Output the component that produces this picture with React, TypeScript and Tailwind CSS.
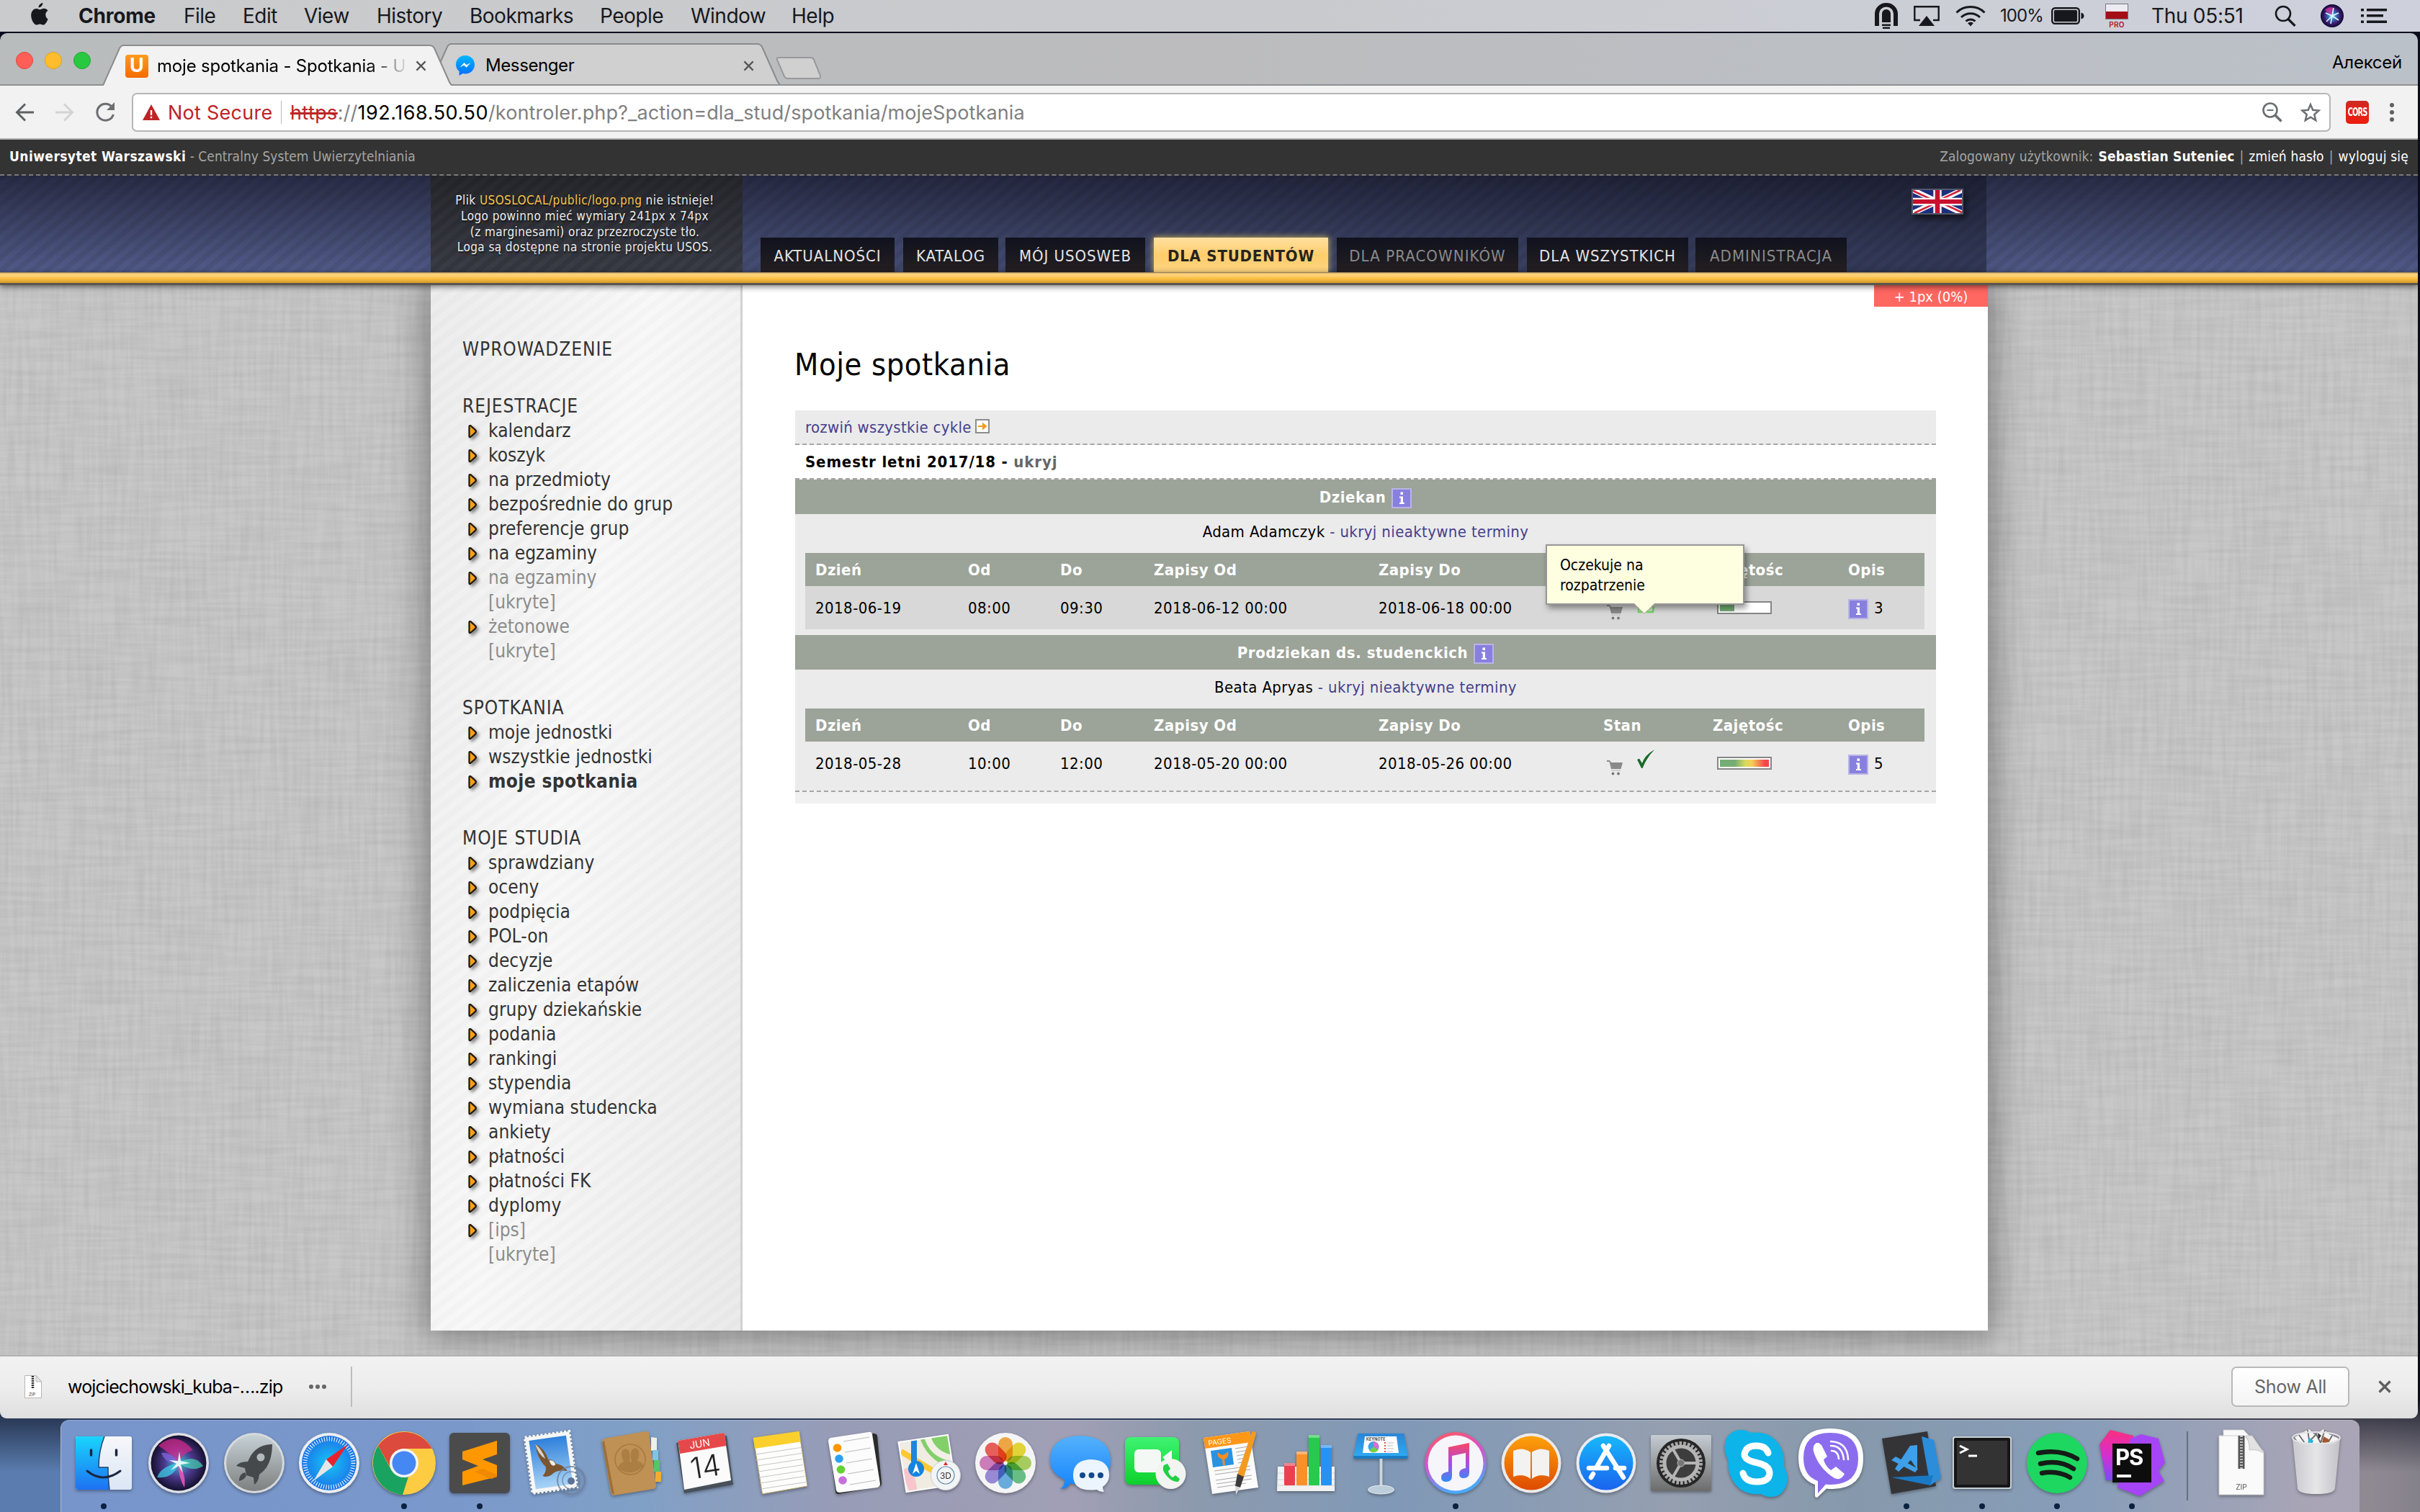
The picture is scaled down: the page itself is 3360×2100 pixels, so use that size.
import React from "react";

const TAHOMA = "font-['DejaVu_Sans_Condensed','DejaVu_Sans',sans-serif]";
const SYSTEM = "font-[Inter,'Liberation_Sans',sans-serif]";

/* ---------- macOS menu bar ---------- */

const MENUS = [
  { label: "File", w: "w-[82px]" },
  { label: "Edit", w: "w-[85px]" },
  { label: "View", w: "w-[101px]" },
  { label: "History", w: "w-[129px]" },
  { label: "Bookmarks", w: "w-[181px]" },
  { label: "People", w: "w-[126px]" },
  { label: "Window", w: "w-[140px]" },
  { label: "Help", w: "w-[80px]" },
];

function SiriBadge() {
  return (
    <svg viewBox="0 0 32 32" className="size-8">
      <defs>
        <radialGradient id="siriSmall" cx="50%" cy="50%" r="50%">
          <stop offset="0" stopColor="#9ff" />
          <stop offset=".3" stopColor="#3a7fc8" />
          <stop offset=".7" stopColor="#3b1a6e" />
          <stop offset="1" stopColor="#0c0a2c" />
        </radialGradient>
      </defs>
      <circle cx="16" cy="16" r="16" fill="url(#siriSmall)" />
      <path d="M6 8q6-6 12-3l-2 11z" fill="#d0359c" opacity=".8" />
      <path d="M16 16 18 5M16 16l9-4M16 16l9 6M16 16l-2 11M16 16l-8 8M16 16l-9-4" stroke="#d8fbff" strokeWidth="1.6" />
    </svg>
  );
}

function MenuBar() {
  return (
    <div className={`${SYSTEM} flex h-11 w-full items-center bg-gradient-to-r from-[#cacbcd] via-[#c9cacd] to-[#ced1dc] text-[28px] leading-[32px] tracking-[-0.5px] text-[#17181d]`}>
      <svg viewBox="0 0 26 32" className="ml-[42px] h-[31px] w-[26px] -translate-y-[3px]">
        <path d="M17.5 0c.2 3.500-2.900 6.700-5.900 6.700C11.200 3.500 14.300.4 17.500 0zM25 23c-1.600 4.500-4 8.600-6.800 8.600-1.900 0-2.500-1.200-4.800-1.200s-3 1.200-4.800 1.200C5.200 31.600.8 24.600.8 17.800c0-6.200 3.900-9.600 7.700-9.600 2.200 0 3.900 1.400 5.200 1.400 1.300 0 3.200-1.600 5.700-1.600 1.800 0 4 .9 5.400 3-4.700 2.800-3.900 9.800.2 12z" fill="#17181d" />
      </svg>
      <span className="ml-[41px] w-[146px] font-bold tracking-[-0.2px]">Chrome</span>
      {MENUS.map((m) => (
        <span key={m.label} className={`${m.w} shrink-0`}>{m.label}</span>
      ))}
      <div className="ml-auto flex items-center">
        <svg viewBox="0 0 32 36" className="h-9 w-8">
          <path d="M0 32V15a16 15 0 0 1 32 0v17h-6V15a10 9.500 0 0 0-20 0v17z" fill="#17181d" />
          <path d="M10 27V15a6 6 0 0 1 12 0v12zM10 29.500h12V32H10zM11 33.500h10V36H11z" fill="#17181d" />
        </svg>
        <svg viewBox="0 0 36 28" className="ml-[22px] h-7 w-9">
          <path d="M9 20H1.300V1.300h33.400V20H27" fill="none" stroke="#17181d" strokeWidth="2.400" />
          <path d="M18 14 29 28H7z" fill="#17181d" />
        </svg>
        <svg viewBox="0 0 42 30" className="ml-[22px] h-[30px] w-[42px]" fill="none" stroke="#17181d" strokeWidth="3">
          <path d="M1.500 10.500a28 28 0 0 1 39 0M8 17a18.500 18.500 0 0 1 26 0M14.500 22.500a9.500 9.500 0 0 1 13 0" />
          <path d="M21 29.500l-4-4.500q4-3 8 0z" fill="#17181d" stroke="none" />
        </svg>
        <span className="ml-[20px] w-[63px] text-[24px] tracking-[-0.9px]">100%</span>
        <svg viewBox="0 0 46 24" className="ml-[8px] h-6 w-[46px]">
          <rect x="1.200" y="1.200" width="37.600" height="21.600" rx="4" fill="none" stroke="#17181d" strokeWidth="2.400" />
          <rect x="4" y="4" width="32" height="16" rx="1.500" fill="#17181d" />
          <path d="M41.500 7.500q4 1 4 4.500t-4 4.500z" fill="#17181d" />
        </svg>
        <div className="ml-[29px] flex w-8 flex-col items-center">
          <div className="h-[22px] w-8 border border-[#77777f] bg-gradient-to-b from-[#ebebf2] from-50% to-[#a50e16] to-50%" />
          <span className="mt-[2px] text-[10px] leading-[10px] font-semibold tracking-[0.3px] text-[#b0142a]">PRO</span>
        </div>
        <span className="ml-[32px] w-[129px] whitespace-nowrap tracking-[-0.3px]">Thu 05:51</span>
        <svg viewBox="0 0 30 30" className="ml-[42px] size-[30px]" fill="none" stroke="#17181d" strokeWidth="2.600">
          <circle cx="12" cy="12" r="10" />
          <path d="m19 19.500 9.500 9.500" strokeWidth="3.200" />
        </svg>
        <div className="ml-[34px]"><SiriBadge /></div>
        <svg viewBox="0 0 36 20" className="mr-[46px] ml-6 h-5 w-9" fill="#17181d">
          <path d="M0 0h4v3.500H0zM0 8h4v3.500H0zM0 16.500h4V20H0zM8 0h28v3.500H8zM8 8h23v3.500H8zM8 16.500h28V20H8z" />
        </svg>
      </div>
    </div>
  );
}

/* ---------- Chrome frame ---------- */

function TabShape({ fill }: { fill: string }) {
  return (
    <svg viewBox="0 0 486 57" className="absolute inset-0 h-[57px] w-[486px]">
      <path d="M0 57Q2 56 3 52L24 5Q26 1 30 1H454Q459 1 461 5L482 52Q484 56 486 57Z" fill={fill} />
      <path d="M0 57Q2 56 3 52L24 5Q26 1 30 1H454Q459 1 461 5L482 52Q484 56 486 57" fill="none" stroke="#8b8b8d" strokeWidth="2" />
    </svg>
  );
}

function CloseX({ className }: { className: string }) {
  return (
    <svg viewBox="0 0 16 16" className={className}>
      <path d="M1.500 1.500l13 13M14.500 1.500l-13 13" stroke="#555" strokeWidth="2.400" />
    </svg>
  );
}

function TabStrip() {
  return (
    <div className={`${SYSTEM} flex h-[73px] items-end rounded-t-[10px] border-b-2 border-[#8f9092] bg-gradient-to-r from-[#b9bcbd] via-[#bcbcbe] to-[#bbc1c9] text-[24px]`}>
      <div className="mb-[21px] ml-[22px] flex w-[120px] gap-4">
        <span className="size-6 rounded-full border border-[#e2463f] bg-[#ff5f57]" />
        <span className="size-6 rounded-full border border-[#dea123] bg-[#ffbd2e]" />
        <span className="size-6 rounded-full border border-[#1aab29] bg-[#28c940]" />
      </div>
      <div className="relative z-10 -mb-[2px] h-[57px] w-[486px]">
        <TabShape fill="#f2f2f2" />
        <div className="relative flex h-full items-center pt-[2px]">
          <span className="ml-8 flex h-8 w-8 items-center justify-center rounded bg-gradient-to-b from-[#ff9a1c] to-[#f56a00] text-[27px] font-bold text-white">U</span>
          <span className="ml-3 w-[350px] overflow-hidden bg-gradient-to-r from-black from-84% to-transparent bg-clip-text whitespace-nowrap tracking-[-0.2px] text-transparent">moje spotkania - Spotkania - U</span>
          <CloseX className="ml-[9px] size-[15px]" />
        </div>
      </div>
      <div className="relative -ml-[31px] h-[57px] w-[486px]">
        <TabShape fill="#d0d0d0" />
        <div className="relative flex h-full items-center pt-[5px]">
          <svg viewBox="0 0 28 28" className="ml-[35px] size-7">
            <defs>
              <linearGradient id="msgr" x1="0" y1="0" x2="0" y2="1">
                <stop offset="0" stopColor="#00b8ff" />
                <stop offset="1" stopColor="#006cff" />
              </linearGradient>
            </defs>
            <path d="M14 0C6.300 0 1 5.600 1 12.600c0 4 1.700 7.300 4.600 9.500V28l5-3c1 .2 2.200.4 3.400.4 7.700 0 13-5.700 13-12.700S21.700 0 14 0z" fill="url(#msgr)" />
            <path d="m6.500 16.500 6-6.500 3.300 3.200L21.500 10l-6 6.700-3.300-3.300z" fill="#fff" />
          </svg>
          <span className="ml-[14px] w-[358px] tracking-[-0.4px] text-black">Messenger</span>
          <CloseX className="size-[15px]" />
        </div>
      </div>
      <svg viewBox="0 0 64 32" className="mb-[6px] -ml-[6px] h-8 w-16">
        <path d="M4 1H48q4 0 5 3l9 22q1 4-3 4H17q-4 0-5-3L2 4Q1 1 4 1z" fill="#d0d0d0" stroke="#98989a" strokeWidth="2" />
      </svg>
      <span className="mr-[22px] mb-[12px] ml-auto tracking-[-0.25px] text-black">Алексей</span>
    </div>
  );
}

function Toolbar() {
  return (
    <div className={`${SYSTEM} flex h-[75px] items-center border-b-2 border-[#b0b0b0] bg-[#f2f2f2] text-[27px] leading-[32px]`}>
      <svg viewBox="0 0 26 26" className="ml-[21px] size-[26px]" fill="none" stroke="#5f6063" strokeWidth="3">
        <path d="M26 13H3M14 1.500 2.500 13 14 24.500" />
      </svg>
      <svg viewBox="0 0 26 26" className="ml-[30px] size-[26px]" fill="none" stroke="#d3d3d3" strokeWidth="3">
        <path d="M0 13h23M12 1.500 23.500 13 12 24.500" />
      </svg>
      <svg viewBox="0 0 28 28" className="ml-[29px] size-7" fill="none" stroke="#6d6e71" strokeWidth="3">
        <path d="M24 7.500A11.500 11.500 0 1 0 25.400 17" />
        <path d="M27 0v11H16z" fill="#6d6e71" stroke="none" />
      </svg>
      <div className="ml-[23px] flex h-[54px] w-[3053px] items-center rounded-[7px] border-2 border-[#b6b6b6] bg-white">
        <svg viewBox="0 0 24 22" className="ml-[13px] h-[22px] w-6">
          <path d="M12 0l12 22H0z" fill="#bd2426" />
          <path d="M10.800 8h2.400v7h-2.400zM10.800 16.800h2.400v2.400h-2.400z" fill="#fff" />
        </svg>
        <span className="mt-[2px] ml-[11px] w-[157px] whitespace-nowrap tracking-[0.25px] text-[#bd2426]">Not Secure</span>
        <span className="h-8 w-px bg-[#bbb]" />
        <span className="mt-[2px] ml-[12px] whitespace-nowrap tracking-[0.12px] text-[#808080]">
          <span className="tracking-[0.4px] text-[#bd2426] line-through decoration-[3px]">https</span>://
          <span className="tracking-[0.55px] text-black">192.168.50.50</span>
          /kontroler.php?_action=dla_stud/spotkania/mojeSpotkania
        </span>
        <svg viewBox="0 0 28 28" className="ml-auto size-7" fill="none" stroke="#6d6e71" strokeWidth="2.600">
          <circle cx="11" cy="11" r="9.500" />
          <path d="M6.500 11h9" strokeWidth="2" />
          <path d="m18 18 8.500 8.500" strokeWidth="3.600" />
        </svg>
        <svg viewBox="0 0 28 28" className="mr-[12px] ml-[25px] size-7" fill="none" stroke="#6d6e71" strokeWidth="2.500">
          <path d="M14 3.200l3.300 7.600 8.300.7-6.300 5.500 1.900 8.100-7.200-4.300-7.200 4.300 1.900-8.100-6.300-5.500 8.300-.7z" />
        </svg>
      </div>
      <span className="ml-[21px] flex size-8 items-center justify-center rounded-[5px] bg-gradient-to-b from-[#cf2a20] to-[#ee1c0b]">
        <span className="scale-y-150 font-['DejaVu_Sans_Condensed'] text-[11px] leading-none font-bold tracking-[-0.9px] text-white">CORS</span>
      </span>
      <div className="ml-[29px] flex flex-col gap-1">
        <span className="size-[6px] rounded-full bg-[#5f6063]" />
        <span className="size-[6px] rounded-full bg-[#5f6063]" />
        <span className="size-[6px] rounded-full bg-[#5f6063]" />
      </div>
    </div>
  );
}

/* ---------- USOSweb page ---------- */

function TopBar() {
  return (
    <div className={`${TAHOMA} flex h-[50px] items-center justify-between border-b-2 border-dashed border-[#7a7a7a] bg-[#333] pr-[13px] pb-[1px] pl-[13px] text-[19px] leading-none whitespace-nowrap text-[#a5a5a5]`}>
      <div>
        <b className="tracking-[0.42px] text-white">Uniwersytet Warszawski</b>
        <span className="tracking-[0.05px]"> - Centralny System Uwierzytelniania</span>
      </div>
      <div>
        <span className="tracking-[0.1px]">Zalogowany użytkownik:</span>
        <b className="ml-[7px] tracking-[0.2px] text-white">Sebastian Suteniec</b>
        <span className="mx-[7px]">|</span>
        <span className="tracking-[0.15px] text-white">zmień hasło</span>
        <span className="mx-[7px]">|</span>
        <span className="tracking-[0.2px] text-white">wyloguj się</span>
      </div>
    </div>
  );
}

const NAV = [
  { label: "AKTUALNOŚCI", kind: "on", w: "w-[186px] mr-[12px]" },
  { label: "KATALOG", kind: "on", w: "w-[132px] mr-[10px]" },
  { label: "MÓJ USOSWEB", kind: "on", w: "w-[194px] mr-[12px]" },
  { label: "DLA STUDENTÓW", kind: "active", w: "w-[242px] mr-[12px]" },
  { label: "DLA PRACOWNIKÓW", kind: "off", w: "w-[252px] mr-[12px]" },
  { label: "DLA WSZYSTKICH", kind: "on", w: "w-[224px] mr-[10px]" },
  { label: "ADMINISTRACJA", kind: "off", w: "w-[210px]" },
];

const NAV_STYLE: Record<string, string> = {
  on: "bg-gradient-to-b from-[#10121d] to-[#241f22] text-[#e4e4e4] tracking-[0.95px]",
  off: "bg-gradient-to-b from-[#10121d] to-[#241f22] text-[#8a8a8a] tracking-[1.1px]",
  active: "bg-gradient-to-b from-[#ffe0a0] via-[#ffcd6b] to-[#fcd47f] font-bold text-[#26241f] tracking-[0.8px] shadow-[0_0_8px_1px_#b9a35a]",
};

function UkFlag() {
  return (
    <svg viewBox="0 0 72 36" className="h-9 w-[72px] border-2 border-[#55586a] shadow-[4px_6px_8px_rgba(0,0,0,.5)]" preserveAspectRatio="none">
      <path d="M0 0h72v36H0z" fill="#1b2f7d" />
      <path d="M0 0l72 36M72 0L0 36" stroke="#fff" strokeWidth="8" />
      <path d="M0 1l32 16M70 0L40 15M2 36l30-15M72 35L40 19" stroke="#d2243a" strokeWidth="3" />
      <path d="M36 0v36M0 18h72" stroke="#fff" strokeWidth="12" />
      <path d="M36 0v36M0 18h72" stroke="#c8102e" strokeWidth="7" />
    </svg>
  );
}

function Header() {
  return (
    <header className={`${TAHOMA} flex h-[134px] justify-center bg-[repeating-linear-gradient(140deg,rgba(0,0,0,.07)_0_7px,transparent_7px_14px),linear-gradient(#282b44,#515b88)] pr-[1px]`}>
      <div className="flex h-full w-[433px] flex-col items-center bg-[repeating-linear-gradient(140deg,rgba(0,0,0,.1)_0_7px,transparent_7px_14px),linear-gradient(#26272c,#3b3d47)] pt-[24px] pr-[5px] text-[17px] leading-[21.800px] tracking-[0.42px] whitespace-nowrap text-[#ececec] [text-shadow:1px_2px_2px_rgba(0,0,0,.7)]">
        <span>Plik <span className="text-[#f6c34b]">USOSLOCAL/public/logo.png</span> nie istnieje!</span>
        <span>Logo powinno mieć wymiary 241px x 74px</span>
        <span>(z marginesami) oraz przezroczyste tło.</span>
        <span>Loga są dostępne na stronie projektu USOS.</span>
      </div>
      <div className="flex h-full w-[1727px] bg-[linear-gradient(90deg,rgba(10,12,22,.08),rgba(10,12,22,.38))]">
        <nav className="mt-auto ml-[25px] flex text-[22px]">
          {NAV.map((n) => (
            <span key={n.label} className={`${n.w} ${NAV_STYLE[n.kind]} flex h-[48px] shrink-0 items-center justify-center pt-[3px] whitespace-nowrap`}>
              {n.label}
            </span>
          ))}
        </nav>
        <div className="mt-[18px] ml-[90px]"><UkFlag /></div>
      </div>
    </header>
  );
}

type MenuItem = { label: string; tone?: "muted" | "bold"; hidden?: boolean };
const SECTIONS: { title: string; items: MenuItem[] }[] = [
  { title: "WPROWADZENIE", items: [] },
  {
    title: "REJESTRACJE",
    items: [
      { label: "kalendarz" },
      { label: "koszyk" },
      { label: "na przedmioty" },
      { label: "bezpośrednie do grup" },
      { label: "preferencje grup" },
      { label: "na egzaminy" },
      { label: "na egzaminy", tone: "muted", hidden: true },
      { label: "żetonowe", tone: "muted", hidden: true },
    ],
  },
  {
    title: "SPOTKANIA",
    items: [{ label: "moje jednostki" }, { label: "wszystkie jednostki" }, { label: "moje spotkania", tone: "bold" }],
  },
  {
    title: "MOJE STUDIA",
    items: [
      { label: "sprawdziany" },
      { label: "oceny" },
      { label: "podpięcia" },
      { label: "POL-on" },
      { label: "decyzje" },
      { label: "zaliczenia etapów" },
      { label: "grupy dziekańskie" },
      { label: "podania" },
      { label: "rankingi" },
      { label: "stypendia" },
      { label: "wymiana studencka" },
      { label: "ankiety" },
      { label: "płatności" },
      { label: "płatności FK" },
      { label: "dyplomy" },
      { label: "[ips]", tone: "muted", hidden: true },
    ],
  },
];

const TONE = { muted: "text-[#8c8c8c]", bold: "font-bold tracking-[0.4px]", plain: "tracking-[0.05px]" };

function Sidebar() {
  return (
    <aside className="flex w-[433px] shrink-0 flex-col gap-[45px] border-r-[3px] border-[#d2d2d2] bg-[repeating-linear-gradient(142deg,rgba(0,0,0,.014)_0_8px,transparent_8px_16px),linear-gradient(100deg,#ececec,#f8f8f8_45%,#eaeaea)] pt-[72px] pl-[44px] text-[26px] leading-[34px] text-[#333]">
      {SECTIONS.map((s) => (
        <section key={s.title}>
          <h2 className="tracking-[0.95px]">{s.title}</h2>
          <ul>
            {s.items.map((it, i) => (
              <li key={i} className="flex">
                <svg viewBox="0 0 22 24" className="mt-[8px] ml-[6px] h-6 w-[22px] shrink-0 overflow-visible drop-shadow-[3px_3px_2px_rgba(0,0,0,.45)]">
                  <path d="M3.500 3.500q0-2 2-1.200l6.500 6q1.700 1.700 0 3.400l-6.500 6q-2 1-2-1z" fill="#f6a01a" stroke="#1d1405" strokeWidth="2.200" />
                </svg>
                <span className={`ml-[8px] whitespace-nowrap ${TONE[it.tone ?? "plain"]}`}>
                  {it.label}
                  {it.hidden && <span className="block">[ukryte]</span>}
                </span>
              </li>
            ))}
          </ul>
        </section>
      ))}
    </aside>
  );
}

function InfoIcon() {
  return (
    <svg viewBox="0 0 28 28" className="size-7 shrink-0">
      <rect x="1" y="1" width="26" height="26" fill="#8880de" stroke="#b9b4e6" strokeWidth="2" />
      <path d="M12.500 5.500h3.500v3.500h-3.500zM11 11.500h5v8.500h2v2h-7v-2h1.800v-6.500H11z" fill="#fff" />
    </svg>
  );
}

function Cart() {
  return (
    <svg viewBox="0 0 22 22" className="h-[22px] w-[22px]">
      <path d="M0 1h4l2 3h16l-2.500 9H6L3.500 3H0z" fill="#8a8a8a" />
      <path d="M6 14.500h13v1H6z" fill="#b5b5b5" />
      <circle cx="8.500" cy="19.500" r="1.900" fill="#777" />
      <circle cx="16" cy="19.500" r="1.900" fill="#777" />
    </svg>
  );
}

const COLS = "grid grid-cols-[212px_128px_130px_312px_312px_152px_188px_106px] pl-[14px]";
const HEADS = ["Dzień", "Od", "Do", "Zapisy Od", "Zapisy Do", "Stan", "Zajętośc", "Opis"];

type Meeting = { cells: string[]; full: boolean; count: string; tip?: boolean };

function Tooltip() {
  return (
    <div className="absolute -top-[73px] -left-[80px] z-20 h-[84px] w-[276px] border-2 border-[#979797] bg-[#fefee1] px-[18px] pt-[14px] text-[21px] leading-[27.500px] text-black shadow-[3px_5px_8px_rgba(0,0,0,.4)]">
      <span className="block">Oczekuje na</span>
      <span className="block">rozpatrzenie</span>
      <svg viewBox="0 0 30 16" className="absolute -bottom-[15px] left-[120px] h-4 w-[30px]">
        <path d="M0 0h30L15 15z" fill="#fefee1" />
        <path d="M0 2.500 15 15 30 2.500" fill="none" stroke="#a5a592" strokeWidth="1" />
      </svg>
    </div>
  );
}

function MeetingTable({ m }: { m: Meeting }) {
  return (
    <div className="mx-[14px] w-[1554px]">
      <div className={`${COLS} h-[46px] items-center bg-[#9ca398] font-bold tracking-[0.45px] text-white`}>
        {HEADS.map((h) => (
          <span key={h}>{h}</span>
        ))}
      </div>
      <div className={`${COLS} h-[60px] items-center ${m.tip ? "bg-[#d8d8d8]" : ""}`}>
        {m.cells.map((c, i) => (
          <span key={i} className="whitespace-nowrap tracking-[0.45px]">{c}</span>
        ))}
        <div className="relative flex h-[30px] w-[100px]">
          <div className="mt-[10px] ml-[5px]"><Cart /></div>
          {m.tip ? (
            <svg viewBox="0 0 26 26" className="-mt-[3px] ml-[19px] h-[26px] w-[26px]">
              <path d="M2 4h22v8l-8 6 8 7H2z" fill="#c4e8ba" />
              <path d="M3 14v10h4l2-4M14 24h9l1-8" fill="none" stroke="#74d266" strokeWidth="2.500" />
            </svg>
          ) : (
            <svg viewBox="0 0 28 28" className="-mt-[5px] ml-[19px] h-7 w-7 overflow-visible">
              <path d="M1 15l3-1.500 4 6.500Q12 8 25.500 1 15 11 8.500 27H7z" fill="#1b6a2b" stroke="#f6f6f6" strokeWidth="1.500" paintOrder="stroke" />
            </svg>
          )}
          {m.tip && <Tooltip />}
        </div>
        <div className="ml-[6px] h-[18px] w-[76px] border-2 border-[#868686] bg-white p-[2px]">
          <div className={m.full ? "h-full bg-[linear-gradient(90deg,#74ad75_30%,#d7da5d_52%,#f5cf57_65%,#f4454c_92%)]" : "h-full w-5 bg-[#74ad75]"} />
        </div>
        <div className="flex items-center">
          <div className="mt-[3px]"><InfoIcon /></div>
          <span className="ml-2">{m.count}</span>
        </div>
      </div>
    </div>
  );
}

function Office({ name, person, meeting }: { name: string; person: string; meeting: Meeting }) {
  return (
    <div>
      <div className="flex h-12 items-center justify-center bg-[#9ca398] font-bold tracking-[0.55px] text-white">
        <span>{name}</span>
        <span className="mt-[3px] ml-2"><InfoIcon /></span>
      </div>
      <div className="flex h-[54px] items-center justify-center pb-[6px] tracking-[0.38px]">
        <span className="whitespace-pre text-black">{person} </span>
        <span className="text-[#45418e]">- ukryj nieaktywne terminy</span>
      </div>
      <MeetingTable m={meeting} />
    </div>
  );
}

function Main() {
  return (
    <main className="relative w-[1729px] bg-white pl-[73px] text-[22px] text-black">
      <span className="absolute top-0 right-0 flex h-[30px] w-[158px] items-center justify-center bg-[#ff6760] pt-[2px] text-[20px] text-white">+ 1px (0%)</span>
      <h1 className="-ml-[1px] pt-[80px] text-[43px] leading-[60px] tracking-[0.6px]">Moje spotkania</h1>
      <div className="mt-[34px] w-[1584px] bg-[#ebebeb]">
        <div className="flex h-12 items-center border-b-2 border-dashed border-[#a5a5a5] pl-[14px] text-[#45418e]">
          <span className="tracking-[0.28px]">rozwiń wszystkie cykle</span>
          <svg viewBox="0 0 20 20" className="mb-[2px] ml-[5px] size-5">
            <rect x="1" y="1" width="18" height="18" fill="#fff" stroke="#8d8d8d" strokeWidth="2" />
            <path d="M4 9h6V4.500L16.500 10 10 15.500V11H4z" fill="#f59a17" />
          </svg>
        </div>
        <div className="flex h-12 items-center border-b-2 border-dashed border-[#a5a5a5] bg-white pl-[14px] font-bold tracking-[0.85px]">
          <span className="whitespace-pre">Semestr letni 2017/18 - </span>
          <span className="text-[#666]">ukryj</span>
        </div>
        <Office name="Dziekan" person="Adam Adamczyk" meeting={{ cells: ["2018-06-19", "08:00", "09:30", "2018-06-12 00:00", "2018-06-18 00:00"], full: false, count: "3", tip: true }} />
        <div className="h-2" />
        <Office name="Prodziekan ds. studenckich" person="Beata Apryas" meeting={{ cells: ["2018-05-28", "10:00", "12:00", "2018-05-20 00:00", "2018-05-26 00:00"], full: true, count: "5" }} />
        <div className="mt-2 h-[18px] border-t-2 border-dashed border-[#a5a5a5] bg-[#f1f1f1]" />
      </div>
    </main>
  );
}

function LinenTexture() {
  return (
    <svg className="pointer-events-none absolute inset-0 h-full w-full">
      <filter id="weaveV" x="0" y="0" width="100%" height="100%">
        <feTurbulence type="fractalNoise" baseFrequency="0.16 0.010" numOctaves="2" seed="4" />
        <feColorMatrix values="0 0 0 0 0  0 0 0 0 0  0 0 0 0 0  .5 0 0 0 -.17" />
      </filter>
      <filter id="weaveH" x="0" y="0" width="100%" height="100%">
        <feTurbulence type="fractalNoise" baseFrequency="0.010 0.16" numOctaves="2" seed="9" />
        <feColorMatrix values="0 0 0 0 0  0 0 0 0 0  0 0 0 0 0  .5 0 0 0 -.17" />
      </filter>
      <rect width="100%" height="100%" filter="url(#weaveV)" opacity=".17" />
      <rect width="100%" height="100%" filter="url(#weaveH)" opacity=".17" />
    </svg>
  );
}

function Page() {
  return (
    <div className="relative h-[1688px] overflow-hidden bg-[#c8c8c8]">
      <LinenTexture />
      <div className="relative">
        <TopBar />
        <Header />
        <div className="relative z-10 h-[18px] border-b-[3px] border-[#5b574c] bg-[linear-gradient(#7b6a45,#fdd27e_14%,#fdcf72_35%,#fbbf3f_60%,#d39a2e_100%)] shadow-[0_2px_8px_rgba(0,0,0,.55)]" />
        <div className={`${TAHOMA} ml-[598px] flex h-[1452px] w-[2162px] shadow-[0_0_46px_6px_rgba(0,0,0,.38)]`}>
          <Sidebar />
          <Main />
        </div>
      </div>
    </div>
  );
}

function DownloadShelf() {
  return (
    <div className={`${SYSTEM} flex h-[88px] items-center rounded-b-[9px] border-t-2 border-[#b2b2b2] bg-gradient-to-b from-[#f2f2f2] via-[#ededed] to-[#dfdfdf] pb-[2px] text-[25px] leading-[30px]`}>
      <svg viewBox="0 0 24 32" className="ml-[34px] h-8 w-6">
        <path d="M.5.500H16L23.500 9v22.500H.5z" fill="#fff" stroke="#b5b5b5" />
        <path d="M16 .5V9h7.500z" fill="#e5e5e5" stroke="#b5b5b5" />
        <path d="M11.500 1v17" stroke="#333" strokeWidth="3.500" strokeDasharray="2 1" />
        <text x="6" y="29" className="text-[6px]" fill="#444">ZIP</text>
      </svg>
      <span className="ml-[36px] w-[335px] whitespace-nowrap tracking-[-0.85px] text-black">wojciechowski_kuba-….zip</span>
      <div className="flex gap-[3px]">
        <span className="size-[6px] rounded-full bg-[#666]" />
        <span className="size-[6px] rounded-full bg-[#666]" />
        <span className="size-[6px] rounded-full bg-[#666]" />
      </div>
      <span className="ml-[34px] h-14 w-[2px] bg-[#bdbdbd]" />
      <span className="ml-auto flex h-14 w-[164px] items-center justify-center rounded-[7px] border-2 border-[#b9b9b9] bg-gradient-to-b from-white to-[#f4f4f4] tracking-[-0.3px] text-[#666]">Show All</span>
      <svg viewBox="0 0 18 18" className="mr-[37px] ml-[40px] size-[18px]">
        <path d="M1.500 1.500l15 15M16.500 1.500l-15 15" stroke="#5f5f5f" strokeWidth="3.200" />
      </svg>
    </div>
  );
}

/* ---------- Dock ---------- */

function Grad({ id, stops, x2 = 0, y2 = 1 }: { id: string; stops: string[]; x2?: number; y2?: number }) {
  return (
    <linearGradient id={id} x1="0" y1="0" x2={x2} y2={y2}>
      {stops.map((c, i) => (
        <stop key={i} offset={i / (stops.length - 1)} stopColor={c} />
      ))}
    </linearGradient>
  );
}

const Finder = (
  <>
    <Grad id="fdL" stops={["#1ad5fd", "#1d72f2"]} />
    <Grad id="fdR" stops={["#f6f7fa", "#dbe6f5"]} />
    <rect x="11" y="13" width="78" height="74" rx="3" fill="url(#fdR)" />
    <path d="M51 13H14q-3 0-3 3v68q0 3 3 3h44q-2-14-2-31H43q0-23 8-43z" fill="url(#fdL)" />
    <path d="M51 13q-8 20-8 43h13q0 17 2 31" fill="none" stroke="#24436e" strokeWidth="1.500" />
    <path d="M32.500 32v7M67.500 32v7" stroke="#1a2740" strokeWidth="3.500" strokeLinecap="round" />
    <path d="M27 61q22 18 46 0" fill="none" stroke="#1a2740" strokeWidth="3" strokeLinecap="round" />
  </>
);
const Siri = (
  <>
    <radialGradient id="siriBg"><stop offset="0" stopColor="#35c5d8" /><stop offset=".5" stopColor="#4c3a8e" /><stop offset="1" stopColor="#14102e" /></radialGradient>
    <circle cx="50" cy="50" r="42" fill="#dfe0e6" />
    <circle cx="50" cy="50" r="38.500" fill="url(#siriBg)" />
    <path d="M22 26q24-22 48 6Q56 36 50 50 38 36 22 26z" fill="#d82a8c" opacity=".7" />
    <path d="M50 50Q72 36 84 54 70 64 50 50z" fill="#45e2b8" opacity=".65" />
    <path d="M50 50Q44 72 20 70 26 54 50 50z" fill="#3fd5ef" opacity=".7" />
    <path d="M49 50q12 16 9 34-8-14-9-34z" fill="#e657b4" opacity=".9" />
    <path d="M26 36q14-2 24 14-18 2-24-14z" fill="#7e62d8" opacity=".8" />
    <path d="m51 34 2 13 13 3-13 2 3 12-6-10-11 6 8-9-10-5 12 1z" fill="#f4ffff" opacity=".9" />
  </>
);
const Launchpad = (
  <>
    <Grad id="lpBg" stops={["#c6d1d6", "#7e8080"]} />
    <circle cx="50" cy="50" r="42" fill="#d6dadc" />
    <circle cx="50" cy="50" r="39" fill="url(#lpBg)" />
    <path d="M75 24q-20 0-30 16l-4 8q-12 0-16 6l12 3 2 10 10 3 1 10q6-4 7-14Q75 54 75 24z" fill="#46494b" />
    <circle cx="59" cy="42" r="5.500" fill="#b2babd" />
    <path d="M37 63q-8 2-8 12 8-2 10-8z" fill="#46494b" />
  </>
);
const Safari = (
  <>
    <radialGradient id="sfBg"><stop offset="0" stopColor="#17c6f5" /><stop offset="1" stopColor="#1b73e8" /></radialGradient>
    <circle cx="50" cy="50" r="42" fill="#eceef2" />
    <circle cx="50" cy="50" r="38" fill="url(#sfBg)" />
    <circle cx="50" cy="50" r="33.500" fill="none" stroke="#fff" strokeWidth="6" strokeDasharray="1 2.500" />
    <path d="M76 24 46 45l9 10z" fill="#e8222c" />
    <path d="M28 75 46 45l9 10z" fill="#e6e6e6" />
  </>
);
const Chrome = (
  <>
    <circle cx="50" cy="50" r="44" fill="#fdcc42" />
    <path d="M14 26A44 44 0 0 1 89 30H50A20 20 0 0 0 31 56z" fill="#dc4a3d" />
    <path d="M14 26 32.500 60Q40 71 56 69L48 94A44 44 0 0 1 14 26z" fill="#1aa260" />
    <circle cx="50" cy="50" r="20" fill="#f4f4f4" />
    <circle cx="50" cy="50" r="16.500" fill="#4587f3" />
  </>
);
const Sublime = (
  <>
    <rect x="8" y="8" width="84" height="84" rx="6" fill="#4b4b4c" />
    <path d="M74 19v19L54 45l20 8v16L26 81V62l22-8-22-9V34z" fill="#ff9800" />
    <path d="m54 58 20 8v3l-8 3-24-10z" fill="#f08800" />
  </>
);
const Mail = (
  <>
    <Grad id="mlBg" stops={["#2f80dc", "#a8d4f5"]} />
    <g transform="rotate(-8 45 50)">
      <rect x="14" y="10" width="62" height="78" fill="#f6f6f6" stroke="#f6f6f6" strokeWidth="4" strokeDasharray="3 2.500" />
      <rect x="19" y="15" width="52" height="68" fill="url(#mlBg)" />
      <path d="M27 21q12 7 15 24 7 0 10 7 10 3 14 12-15-4-22 2-8 4-13 0 6-4 6-12-10-12-10-33z" fill="#7a5531" />
      <path d="M27 21q8 8 11 22-9-7-11-22z" fill="#d9d2c4" />
      <path d="M43 46q7 0 8 7-6 4-8-7z" fill="#f3efe6" />
    </g>
    <circle cx="73" cy="74" r="19" fill="none" stroke="#6d7f9d" strokeWidth="2" opacity=".8" />
    <circle cx="73" cy="74" r="12" fill="none" stroke="#6d7f9d" strokeWidth="1.500" opacity=".8" />
    <circle cx="73" cy="75" r="5" fill="#5b7196" />
  </>
);
const Contacts = (
  <>
    <path d="M80 14l8 1v18h-8z" fill="#eee" />
    <path d="M82 32h8v14h-8z" fill="#7cc5e8" />
    <path d="M84 46h8v16h-8z" fill="#56c568" />
    <path d="M86 62h8v14h-8z" fill="#f0ad33" />
    <path d="M15 16 72 6q4-1 5 3l10 72q0 5-4 5L28 95q-3 0-4-4L12 21q0-4 3-5z" fill="#c09154" />
    <path d="m12 21 3-2 14 75-4-2z" fill="#9d7038" />
    <ellipse cx="51" cy="45" rx="21" ry="21" fill="none" stroke="#a67a3f" strokeWidth="1.500" />
    <path d="M34 57q2-7 8-9-7-14 2-18 9 1 6 18h3q-4-17 5-19 9 3 3 18 6 1 9 7-18 17-36 3z" fill="#ab7f44" />
  </>
);
const Calendar = (
  <>
    <path d="m10 22 70-10 9 68-68 12z" fill="#48505a" />
    <path d="m12.500 19 64-11 9.500 66-65 13z" fill="#fbfbfb" />
    <path d="m12.500 19 64-11 3 18-64.500 11z" fill="#e6484a" />
    <g transform="rotate(-9 46 46)">
      <text x="46" y="28" textAnchor="middle" className="font-[Inter] text-[14px]" fill="#fff">JUN</text>
      <text x="49" y="70" textAnchor="middle" className="font-[Inter] text-[41px] font-light" fill="#222">14</text>
    </g>
  </>
);
const Notes = (
  <>
    <path d="m13 15 63.500-9L88 82 25.500 93z" fill="#fdfdfb" stroke="#b8a36a" />
    <path d="m13 15 63.500-9 2 14.500L15 30z" fill="#fbd02d" />
    <path d="m16 38 63-9.500M17 46l63-9.500M18.500 54 81 44.500M19.500 62 82 52.500M21 70l62-9.500M22 78l62-9.500M23.500 86 86 76.500" stroke="#c6c6c6" strokeWidth="1.200" />
  </>
);
const Reminders = (
  <>
    <path d="m18 18 58-9q4 0 5 3l6 66q0 4-4 5l-56 10q-4 0-4-4L14 22q0-3 4-4z" fill="#2b2b2b" />
    <path d="m16 15 53-8q4-1 5 3l11 69q0 4-4 5l-52 7q-4 0-5-3L13 20q0-4 3-5z" fill="#fcfcfc" />
    <path d="m34 20 36-6M36 35l36-6M38 50l36-6M40 65l36-6M43 80l36-6" stroke="#bbb" strokeWidth="1.200" />
    <circle cx="25.500" cy="29" r="5.800" fill="#ff9500" />
    <circle cx="28" cy="44" r="5.800" fill="#2aa1f5" />
    <circle cx="30.500" cy="59" r="5.800" fill="#64d236" />
    <circle cx="33" cy="74" r="5.800" fill="#c56fdc" />
  </>
);
const Maps = (
  <>
    <clipPath id="mapClip"><path d="m6.500 21 68.500-10 11 69-68.500 10z" /></clipPath>
    <g clipPath="url(#mapClip)">
      <path d="M0 0h100v100H0z" fill="#f0ece2" />
      <path d="M34 8h50v50Q44 48 34 8z" fill="#83cf6a" />
      <path d="M46 10q6 30 40 34" stroke="#f3efe6" strokeWidth="9" fill="none" />
      <path d="M10 34 86 80" stroke="#fbc933" strokeWidth="8" />
      <path d="M28 10v46" stroke="#1f86dc" strokeWidth="8" />
      <path d="M10 60l14 36 10-2-8-40z" fill="#f8c5cc" />
    </g>
    <path d="m6.500 21 68.500-10 11 69-68.500 10z" fill="none" stroke="#fff" strokeWidth="2" />
    <circle cx="31" cy="58" r="11" fill="#1583e0" />
    <path d="m31 50 5 15-5-4-5 4z" fill="#fff" />
    <circle cx="72" cy="67" r="20.500" fill="#f3f4f6" stroke="#ccc" />
    <circle cx="72" cy="67" r="12" fill="none" stroke="#5c8fa8" strokeWidth="1.200" />
    <path d="m72 48 3 5h-6z" fill="#e0282c" />
    <text x="72" y="71.500" textAnchor="middle" className="font-[Inter] text-[12px]" fill="#333">3D</text>
  </>
);
const PETALS = ["#f8a12c", "#e9d81f", "#a3cf4b", "#58bd7a", "#59a8de", "#8f80d6", "#cf6fb8", "#ee4d45"];
const Photos = (
  <>
    <circle cx="50" cy="50" r="42" fill="#f5f5f6" />
    {PETALS.map((c, i) => (
      <rect key={c} x="40" y="14" width="20" height="34" rx="10" fill={c} opacity=".88" transform={`rotate(${i * 45} 50 50)`} className="mix-blend-multiply" />
    ))}
    <circle cx="50" cy="50" r="2.500" fill="#fff" />
  </>
);
const Messages = (
  <>
    <Grad id="imB" stops={["#55b1fb", "#1485fe"]} />
    <path d="M50 12q42 2 42 35T50 80q-7 0-14-2-4 8-14 8 7-4 6-13Q8 64 8 46q0-33 42-34z" fill="url(#imB)" />
    <path d="M65 45q25 1 25 22 0 10-9 16 0 4 2 7-7 0-10-3-33 4-33-20 0-21 25-22z" fill="#ecf5fd" />
    <circle cx="53" cy="67" r="4" fill="#12498c" /><circle cx="65.500" cy="67" r="4" fill="#12498c" /><circle cx="78" cy="67" r="4" fill="#12498c" />
  </>
);
const FaceTime = (
  <>
    <Grad id="ftB" stops={["#3ff372", "#0dd12c"]} />
    <rect x="8" y="14" width="75" height="66" rx="8" fill="url(#ftB)" />
    <rect x="21" y="31" width="37" height="32" rx="6" fill="#f4f8f4" />
    <path d="m60 42 13-10v24z" fill="#f4f8f4" />
    <circle cx="71.500" cy="65" r="21" fill="#f1f4f1" />
    <path d="M62 53q-4 6 4 15t16 8l2-4-6-5-4 3q-5-3-6-9l3-3-4-7z" fill="#23cf43" />
  </>
);
const Pages = (
  <>
    <path d="m12 15 64-9 12 78-64 9z" fill="#fbfbfb" />
    <path d="m12 15 64-9 2 15-64 9z" fill="#ff9718" />
    <text x="19" y="26" transform="rotate(-8 19 26)" className="font-[Inter] text-[10px]" fill="#fff">PAGES</text>
    <path d="m22 33 29-4 3 23-29 4z" fill="#2a92e0" />
    <path d="M32 35q6 8 14-1 2 8-5 11l1 8h-3l-1-8q-8-3-6-10z" fill="#ff8a1e" />
    <path d="m56 30 18-3M57 35l17-3M58 40l17-3M59 45l16-3M60 50l15-3M27 61l50-7M28 66l49-7M29 74l50-7M30 79l49-7M31 84l40-6" stroke="#aaa" strokeWidth="1.200" />
    <path d="M79 7q5-3 6 2L68 70l-9-4z" fill="#f39a20" />
    <path d="m59 65 9 4-5 15-7-2z" fill="#3a3a3a" />
    <path d="m56 82 7 2-6 10z" fill="#d6d6d6" />
  </>
);
const Numbers = (
  <>
    <path d="M11 55h79v34H10z" fill="#f2f2f2" />
    <path d="M11 64h79M11 73h79M11 81h79" stroke="#d2d2d2" />
    <rect x="20" y="50" width="15" height="31" rx="1.500" fill="#ea4150" />
    <rect x="37" y="34" width="15" height="47" rx="1.500" fill="#f8902b" />
    <rect x="54" y="11" width="15" height="70" rx="1.500" fill="#27cb4b" />
    <rect x="71" y="25" width="15" height="56" rx="1.500" fill="#2693f3" />
    <path d="M20 50h15v4H20zM37 34h15v4H37zM54 11h15v4H54zM71 25h15v4H71z" fill="#fff" opacity=".35" />
  </>
);
const Keynote = (
  <>
    <Grad id="kn" stops={["#2a86d8", "#2fa9f2"]} />
    <path d="M48.500 43h4v40h-4z" fill="#cdd5dc" />
    <ellipse cx="50.500" cy="87" rx="18" ry="6" fill="#bdcddb" stroke="#e7eef3" />
    <path d="M18.500 9h64l5 31h-75z" fill="url(#kn)" />
    <path d="M12.500 40h75v4h-75z" fill="#1a7cc4" />
    <path d="M28 13h44l3 23H25z" fill="#fff" />
    <text x="30" y="18.500" className="font-[Inter] text-[5.500px] font-bold" fill="#444">KEYNOTE</text>
    <circle cx="40" cy="27.500" r="7.500" fill="#3aa5e8" />
    <path d="M40 27.500V20a7.500 7.500 0 0 1 6.500 11z" fill="#d66fd0" /><path d="m40 27.500 6.500 4a7.500 7.500 0 0 1-12.500 1z" fill="#77d04a" />
    <path d="M55 22h2M55 26h2M55 30h2M55 34h2" stroke="#e05050" strokeWidth="2" /><path d="M59 22h9M59 26h8M59 30h9M59 34h8" stroke="#bbb" />
  </>
);
const ITunes = (
  <>
    <Grad id="itR" x2={0.3} stops={["#ff5a55", "#d752d0", "#4aa8f8"]} />
    <Grad id="itN" stops={["#f8485e", "#b04be0", "#2f8df5"]} />
    <circle cx="50" cy="50" r="43" fill="url(#itR)" />
    <circle cx="50" cy="50" r="38.500" fill="#f6f5fa" />
    <path d="M40 28 69 22v41q0 8-8 8-6 0-6-6 0-7 9-8V36l-19 4v28q0 8-8 8-7 0-7-6 0-7 10-8z" fill="url(#itN)" />
  </>
);
const IBooks = (
  <>
    <Grad id="ib" stops={["#fda10b", "#de4b02"]} />
    <circle cx="50" cy="50" r="41.500" fill="#ecebea" />
    <circle cx="50" cy="50" r="37.500" fill="url(#ib)" />
    <path d="M49 35q-11-8-24-2v36q14-5 24 3zM51 35q11-8 24-2v36q-14-5-24 3z" fill="#f4f2f0" />
  </>
);
const AppStore = (
  <>
    <Grad id="as" stops={["#17b8fb", "#1b63ee"]} />
    <circle cx="50" cy="50" r="41.500" fill="#e9ecf2" />
    <circle cx="50" cy="50" r="37.500" fill="url(#as)" />
    <path d="M54 26 36 57M46 26l28 44M26 57h25M63 57h12M32 65l-3 5" stroke="#fff" strokeWidth="6.500" strokeLinecap="round" />
  </>
);
const Settings = (
  <>
    <Grad id="st" stops={["#c5ccd2", "#6c6c6c"]} />
    <rect x="8" y="11" width="84" height="78" rx="2" fill="url(#st)" />
    <circle cx="50" cy="50" r="34" fill="#262626" />
    <circle cx="50" cy="50" r="27" fill="none" stroke="#a8a8a8" strokeWidth="6" strokeDasharray="3.600 2.050" />
    <circle cx="50" cy="50" r="23" fill="#3d3d3d" stroke="#b5b5b5" strokeWidth="5" />
    <path d="M50 50h22M50 50 39 31M50 50 39 69" stroke="#b5b5b5" strokeWidth="4" />
    <circle cx="50" cy="50" r="5" fill="#777" stroke="#bbb" />
  </>
);
const Skype = (
  <>
    <path d="M28 4q8 0 14 4 26-3 39 16 9 14 7 31 7 12 4 24-6 18-22 18-8 0-14-4-27 3-40-20-7-12-5-26Q2 30 8 16 15 4 28 4z" fill="#0cb4ea" />
    <path d="M66 36q-3-10-17-10T33 38q0 8 17 11.500T68 63q0 13-18 13-16 0-19-12" fill="none" stroke="#fff" strokeWidth="9" strokeLinecap="round" />
  </>
);
const Viber = (
  <>
    <path d="M48 2q46 0 46 42 0 41-42 42-6 0-9-.500L30 98q-3 0-3-3V80Q4 72 4 43 4 2 48 2z" fill="#fff" />
    <path d="M48 8q39 0 39 36 0 35-37 36-5 0-8-.500L31 92V75Q11 68 11 43 11 8 48 8z" fill="#8b6cee" />
    <path d="M29 22q-7 4-3 15 8 22 28 34 9 4 14-6l-12-10-7 5q-8-6-10-15l5-4-8-16-4-3z" fill="#fff" />
    <path d="M50 33q9 0 10 11M49 26q16 0 18 19M49 20q23 1 24 25" fill="none" stroke="#fff" strokeWidth="2.600" strokeLinecap="round" />
  </>
);
const VsCode = (
  <g transform="translate(3 0)">
    <path d="m13 16 63-10 12 76-62 11z" fill="#343437" />
    <path d="m68 13 17 5 10 53-15 10z" fill="#2c8ddb" />
    <path d="m26 70 58-3-4 14z" fill="#1a79c4" />
    <path d="m26 46 6-5 31 17-4 5zM31 58l21-32 10-1v34l-9-13-17 16z" fill="#3f9fe8" />
  </g>
);
const Terminal = (
  <>
    <rect x="9" y="13" width="82" height="73" rx="3" fill="#c8d0d4" />
    <rect x="11" y="15" width="78" height="69" rx="2" fill="#161616" />
    <rect x="15" y="19" width="70" height="61" fill="#333" />
    <path d="m19 26 10 5-10 5M31 40h12" fill="none" stroke="#fff" strokeWidth="3" />
  </>
);
const Spotify = (
  <>
    <circle cx="50" cy="50" r="42" fill="#1ed760" />
    <path d="M24 36q30-6 54 8M27 51q26-6 46 7M29 64q22-4 39 6" fill="none" stroke="#151b17" strokeWidth="6.500" strokeLinecap="round" />
  </>
);
const PhpStorm = (
  <>
    <Grad id="psA" stops={["#fb2f7c", "#d52fd0", "#7a4cf5"]} />
    <path d="M20 4l32 8v60l-38 2L5 24z" fill="url(#psA)" />
    <path d="M48 16l15-6 24 6 9 33-9 12 8 14-34 21-31-12z" fill="#a645f6" />
    <rect x="23" y="23" width="54" height="54" fill="#0d0d0d" />
    <text x="27" y="53" className="font-[Inter] text-[31px] font-bold tracking-[-1px]" fill="#fff">PS</text>
    <path d="M29 66h20v4H29z" fill="#fff" />
  </>
);
const ZipFile = (
  <>
    <path d="M26 4h28L82 34v60H20V12h6z" fill="#fafafa" stroke="#d0d0d0" />
    <path d="M20 12h34l28 24" fill="none" stroke="#ccc" />
    <path d="M57 12q6 10 5 20 10-2 20 4L66 12z" fill="#e2e2e2" stroke="#c6c6c6" />
    <path d="M51 12v46" stroke="#555" strokeWidth="9" /><path d="M51 12v46" stroke="#bbb" strokeWidth="4" strokeDasharray="2 2" />
    <text x="51" y="87" textAnchor="middle" className="font-[Inter] text-[10px]" fill="#555">ZIP</text>
  </>
);
const Trash = (
  <>
    <Grad id="tr" x2={1} y2={0} stops={["#cfcfd3", "#efeff1", "#c7c7cc"]} />
    <path d="m20 14 14-8 6-3 8 8 12-8 8 7 13 6-5 8H27z" fill="#f4f4f4" />
    <path d="m26 11 10 14M38 4l2 14M40 20l10-10 6 12M62 4l-6 18M72 12l-6 10" stroke="#6a6a6a" strokeWidth="1.800" fill="none" />
    <path d="m40 15 6 4-2 5-6-2z" fill="#23b5d8" />
    <path d="m60 13 9 5-5 6-6-3z" fill="#a4572f" />
    <path d="m52 8 5 4-4 5z" fill="#333" />
    <path d="M17 15q2 8 33 8t33-8l-7 70q-1 8-26 8t-26-8z" fill="url(#tr)" opacity=".93" />
    <ellipse cx="50" cy="15" rx="33" ry="8" fill="none" stroke="#e3e3e6" strokeWidth="2" />
  </>
);

const APPS: { name: string; art: React.ReactNode; open?: boolean }[] = [
  { name: "Finder", art: Finder, open: true },
  { name: "Siri", art: Siri },
  { name: "Launchpad", art: Launchpad },
  { name: "Safari", art: Safari },
  { name: "Chrome", art: Chrome, open: true },
  { name: "Sublime", art: Sublime, open: true },
  { name: "Mail", art: Mail },
  { name: "Contacts", art: Contacts },
  { name: "Calendar", art: Calendar },
  { name: "Notes", art: Notes },
  { name: "Reminders", art: Reminders },
  { name: "Maps", art: Maps },
  { name: "Photos", art: Photos },
  { name: "Messages", art: Messages },
  { name: "FaceTime", art: FaceTime },
  { name: "Pages", art: Pages },
  { name: "Numbers", art: Numbers },
  { name: "Keynote", art: Keynote },
  { name: "iTunes", art: ITunes, open: true },
  { name: "iBooks", art: IBooks },
  { name: "App Store", art: AppStore },
  { name: "Settings", art: Settings },
  { name: "Skype", art: Skype },
  { name: "Viber", art: Viber },
  { name: "VS Code", art: VsCode, open: true },
  { name: "Terminal", art: Terminal, open: true },
  { name: "Spotify", art: Spotify, open: true },
  { name: "PhpStorm", art: PhpStorm, open: true },
];

function DockIcon({ art, open }: { art: React.ReactNode; open?: boolean }) {
  return (
    <div className="flex w-[104.300px] shrink-0 flex-col items-center">
      <svg viewBox="0 0 100 100" className="size-[100px] overflow-visible drop-shadow-[0_2px_2px_rgba(0,0,0,.35)]">{art}</svg>
      {open && <span className="mt-[6px] size-2 rounded-full bg-[#0b2140]" />}
    </div>
  );
}

function Dock() {
  return (
    <div className="mt-[2px] ml-[84px] flex h-[128px] w-[3192px] rounded-t-[12px] border-t border-l border-white/20 bg-[linear-gradient(90deg,#7795cb_0%,#7b98cb_17%,#80a0c6_25%,#989cb6_34%,#a09fb5_44%,#8d9aad_49%,#8099b7_58%,#959fb0_70%,#8699ac_78%,#879db9_88%,#a9a5b6_98%)] pt-[9px] pl-[7px]">
      {APPS.map((a) => (
        <DockIcon key={a.name} art={a.art} open={a.open} />
      ))}
      <span className="mt-[6px] ml-[24px] h-24 w-[2px] bg-[#5f7087]" />
      <div className="ml-[21px] flex">
        <DockIcon art={ZipFile} />
        <DockIcon art={Trash} />
      </div>
    </div>
  );
}

export default function App() {
  return (
    <div className="h-[2100px] w-[3360px] overflow-hidden bg-[#05070f]">
      <MenuBar />
      <div className="h-[2056px] bg-[linear-gradient(#0a0d1c_0_1900px,rgba(10,13,28,.6)_1926px,transparent_2000px),linear-gradient(90deg,#5a7cae,#5a7cae_50%,#8f8992_98%,#85818b)] pt-[2px]">
        <div className="w-[3357px]">
          <TabStrip />
          <Toolbar />
          <Page />
          <DownloadShelf />
        </div>
        <Dock />
      </div>
    </div>
  );
}
